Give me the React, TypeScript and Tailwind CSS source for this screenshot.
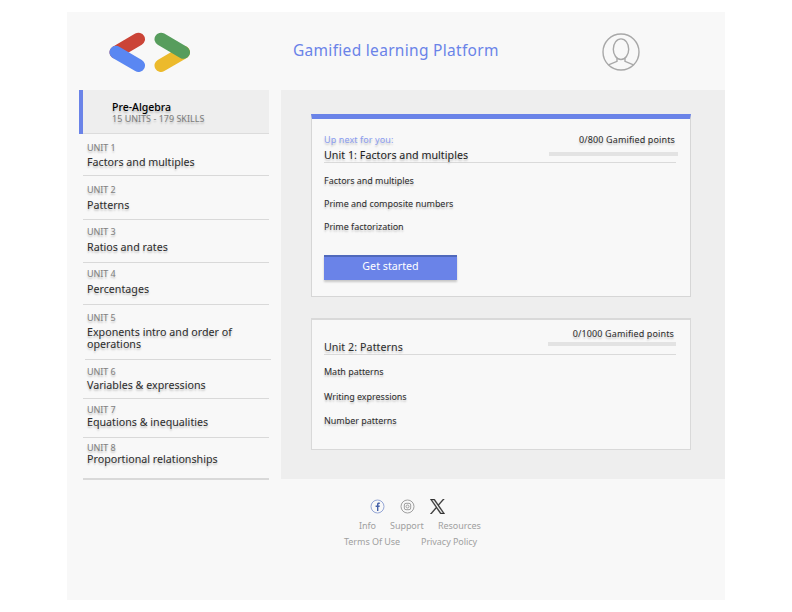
import React from "react";

const units = [
  { unit: "UNIT 1", title: "Factors and multiples", row: "h-[42px] pt-2 border-b", gap: "mt-[2px]" },
  { unit: "UNIT 2", title: "Patterns", row: "h-[44px] pt-2 border-b", gap: "mt-[3px]" },
  { unit: "UNIT 3", title: "Ratios and rates", row: "h-[43px] pt-1.5 border-b", gap: "mt-[3px]" },
  { unit: "UNIT 4", title: "Percentages", row: "h-[42px] pt-[5px] border-b", gap: "mt-[3px]" },
  { unit: "UNIT 5", title: "Exponents intro and order of operations", row: "h-[55px] pt-[7px] border-b", gap: "mt-[2px]" },
  { unit: "UNIT 6", title: "Variables & expressions", row: "h-[39px] pt-1.5 border-b", gap: "mt-px" },
  { unit: "UNIT 7", title: "Equations & inequalities", row: "h-[39px] pt-[5px] border-b", gap: "mt-0" },
  { unit: "UNIT 8", title: "Proportional relationships", row: "h-[42px] pt-1 border-b-2", gap: "-mt-px" },
];

const shadow = "[text-shadow:0_2px_2px_rgba(0,0,0,0.22)]";

function Logo() {
  return (
    <svg className="h-[42px] w-[84px]" viewBox="0 0 84 42" fill="none" strokeWidth="13" strokeLinecap="round">
      <path d="M30.500 8.200 8 21.300" stroke="#cb4437" />
      <path d="M8 21.300 30.500 34.500" stroke="#5a87f2" />
      <path d="M53 34.500 75.500 21.300" stroke="#ecba2c" />
      <path d="M53 8.200 75.500 21.300" stroke="#579d5d" />
    </svg>
  );
}

function Avatar() {
  return (
    <svg className="h-[38px] w-[38px]" viewBox="0 0 38 38" fill="none" stroke="#a8a8a8" strokeWidth="1.4">
      <circle cx="19" cy="19" r="18" />
      <ellipse cx="19" cy="16.2" rx="7.700" ry="10.300" />
      <path d="M15 25.200v3.200L6.500 31.800M23 25.200v3.200l8.500 3.400" />
    </svg>
  );
}

function Sidebar() {
  return (
    <aside className="w-[214px] pl-3">
      <div className="flex h-11 w-[190px] border-l-[4.500px] border-[#6a83e8] bg-[#eeeeee]">
        <div className="flex-1 border-b border-[#dcdcdc] pl-[29px] pt-[11px]">
          <div className={`text-[10.500px] leading-3 font-medium text-black ${shadow}`}>Pre-Algebra</div>
          <div className={`text-[9px] leading-3 text-[#7c7c7c] ${shadow}`}>15 UNITS - 179 SKILLS</div>
        </div>
      </div>
      {units.map((u) => (
        <div
          key={u.unit}
          className={`w-[186px] border-[#d9d9d9] ${u.row} ${u.unit === "UNIT 5" ? "ml-1.5 pl-[2px]" : "ml-1 pl-1"}`}
        >
          <div className={`text-[9px] leading-3 tracking-[-0.05px] text-[#808080] ${shadow}`}>{u.unit}</div>
          <div className={`w-[160px] text-[10.700px] leading-3 text-[#2c2c2c] ${u.gap} ${shadow}`}>{u.title}</div>
        </div>
      ))}
    </aside>
  );
}

function Footer() {
  return (
    <footer className="h-[121px] text-[9px] leading-3 tracking-[-0.05px] text-[#a0a0a0]">
      <div className="flex h-[38px] items-end gap-[15px] pl-[303px]">
        <svg className="mb-[3px] h-[15px] w-[15px]" viewBox="0 0 15 15" fill="none">
          <circle cx="7.500" cy="7.500" r="6.500" stroke="#96a7d6" />
          <path d="M7 12V8H5.600V6.400H7V5.300C7 4 7.700 3.400 8.800 3.400h1V5H9c-.4 0-.6.2-.6.6v.8h1.400L9.600 8H8.400v4z" fill="#4560a8" />
        </svg>
        <svg className="mb-[3px] h-[15px] w-[15px]" viewBox="0 0 15 15" fill="none" stroke="#a0a0a0">
          <circle cx="7.500" cy="7.500" r="6.500" />
          <rect x="4.300" y="4.300" width="6.400" height="6.400" rx="1.700" />
          <circle cx="7.500" cy="7.500" r="1.500" />
        </svg>
        <svg className="mb-[3px] h-[15px] w-[15px]" viewBox="0 0 24 24" fill="#333333" stroke="#333333" strokeWidth="0.600">
          <path d="M14.230 10.160 22.980 0h-2.070l-7.600 8.820L7.250 0H.25l9.180 13.340L.25 24h2.070l8.020-9.310L16.750 24h7zM11.390 13.450l-.93-1.330L3.070 1.560h3.180l5.970 8.530.93 1.330 7.760 11.090h-3.180z" />
        </svg>
      </div>
      <div className="mt-[3px] flex pl-[292px]">
        <span className="w-[31px]">Info</span>
        <span className="w-12">Support</span>
        <span>Resources</span>
      </div>
      <div className="mt-1 flex pl-[277px]">
        <span className="w-[77px]">Terms Of Use</span>
        <span>Privacy Policy</span>
      </div>
    </footer>
  );
}

export default function App() {
  return (
    <div className="h-[612px] w-[792px] overflow-hidden bg-white pl-[67px] pt-3 font-['Noto_Sans',sans-serif] whitespace-nowrap">
      <div className="h-[588px] w-[658px] bg-[#f8f8f8]">
        <header className="flex h-[78px] pl-[41px]">
          <div className="w-[185px] pt-[19px]"><Logo /></div>
          <h1 className="w-[309px] pt-7 text-[15.500px] leading-5 tracking-[0.3px] text-[#6a83e8]">Gamified learning Platform</h1>
          <div className="pt-[21px]"><Avatar /></div>
        </header>
        <div className="flex h-[389px] [&_aside]:whitespace-normal">
          <Sidebar />
          <main className="w-[444px] bg-[#eeeeee] pl-[30px] pt-6">
            <section className="h-[183px] w-[380px] border border-t-[5px] border-[#d6d6d6] border-t-[#6a83e8] bg-[#f8f8f8] pl-3">
              <div className="flex h-[43px] w-[354px] justify-between">
                <div className="pt-[15px]">
                  <div className={`text-[9px] leading-3 tracking-[0.1px] text-[#8b9df0] ${shadow}`}>Up next for you:</div>
                  <h2 className={`mt-[3px] text-[10.700px] leading-3 tracking-[0.03px] text-[#1c1c1c] ${shadow}`}>Unit 1: Factors and multiples</h2>
                </div>
                <div className="flex w-[129px] flex-col items-end pt-[15px]">
                  <div className={`pr-[3px] text-[9px] leading-3 tracking-[0.120px] text-[#2c2c2c] ${shadow}`}>0/800 Gamified points</div>
                  <div className="mt-1.5 h-1 w-full bg-[#e3e3e3]" />
                </div>
              </div>
              <div className="h-px w-[352px] bg-[#dadada]" />
              <ul className={`mt-3 flex flex-col gap-[11px] text-[9px] leading-3 tracking-[-0.04px] text-[#2c2c2c] ${shadow}`}>
                <li>Factors and multiples</li>
                <li>Prime and composite numbers</li>
                <li>Prime factorization</li>
              </ul>
              <button className="mt-[22px] block h-[25px] w-[133px] border-t-2 border-[#5069bb] bg-[#6a83e8] pb-1.5 text-[10.700px] leading-4 text-white shadow-[0_2px_2px_rgba(0,0,0,0.2)]">Get started</button>
            </section>
            <section className="mt-[21px] h-[132px] w-[380px] border border-t-2 border-[#d9d9d9] bg-[#f8f8f8] pl-3">
              <div className="flex h-[34px] w-[352px] justify-between">
                <h2 className={`pt-[21px] text-[10.700px] leading-3 tracking-[0.06px] text-[#2c2c2c] ${shadow}`}>Unit 2: Patterns</h2>
                <div className="flex w-[128px] flex-col items-end pt-2">
                  <div className={`pr-[2px] text-[9px] leading-3 tracking-[0.120px] text-[#2c2c2c] ${shadow}`}>0/1000 Gamified points</div>
                  <div className="mt-[2px] h-1 w-full bg-[#e3e3e3]" />
                </div>
              </div>
              <div className="h-px w-[352px] bg-[#dadada]" />
              <ul className={`mt-[11px] flex flex-col gap-[12.500px] text-[9px] leading-3 tracking-[-0.04px] text-[#2c2c2c] ${shadow}`}>
                <li>Math patterns</li>
                <li>Writing expressions</li>
                <li>Number patterns</li>
              </ul>
            </section>
          </main>
        </div>
        <Footer />
      </div>
    </div>
  );
}
